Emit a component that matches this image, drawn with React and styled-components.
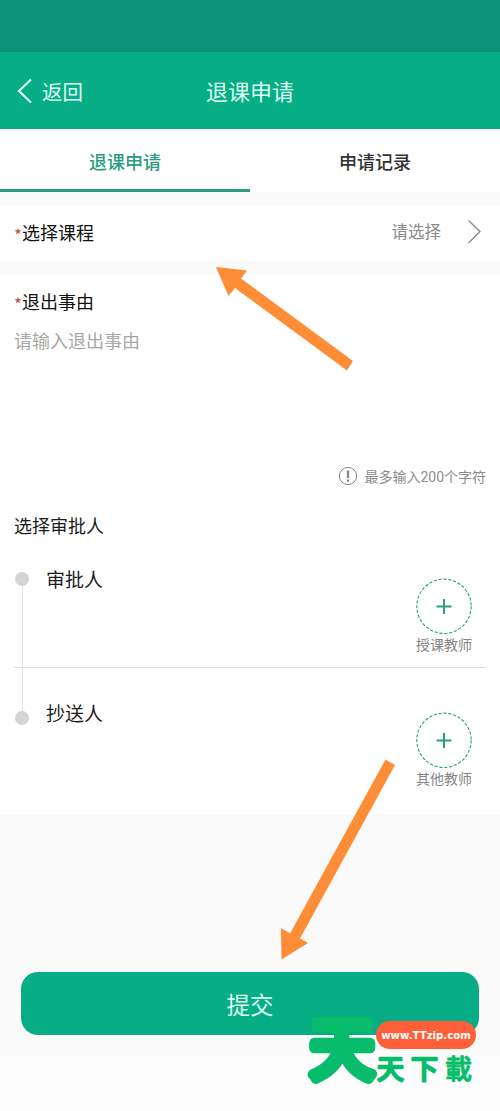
import React from "react";
import styled, { createGlobalStyle } from "styled-components";

const GlobalStyle = createGlobalStyle`
  * { box-sizing: border-box; }
  body {
    margin: 0;
    background: #fdfdfd;
    font-family: "Noto Sans CJK SC", sans-serif;
    color: #1c1c1c;
  }
`;

const Screen = styled.div`
  position: relative;
  width: 500px;
  height: 1111px;
  overflow: hidden;
  display: flex;
  flex-direction: column;
`;

const StatusBar = styled.div`
  height: 52px;
  background: #0b9176;
`;

const Header = styled.header`
  height: 77px;
  background: #07ad85;
  color: #dcfff4;
  display: grid;
  grid-template-columns: 1fr auto 1fr;
  align-items: center;
  padding: 0 17px;
`;

const BackButton = styled.div`
  display: flex;
  align-items: center;
  gap: 9px;
  font-size: 20.5px;
  line-height: 30px;
`;

const Title = styled.h1`
  margin: 0;
  padding-bottom: 2px;
  font-size: 22px;
  font-weight: 400;
  line-height: 32px;
`;

const Tabs = styled.nav`
  display: flex;
  height: 63px;
  background: #fff;
`;

const Tab = styled.div`
  flex: 1;
  text-align: center;
  font-size: 18px;
  font-weight: 500;
  line-height: 64px;
  color: ${(p) => (p.$active ? "#2a9d80" : "#333")};
  border-bottom: 3px solid ${(p) => (p.$active ? "#2a9d80" : "transparent")};
`;

const Gap = styled.div`
  height: 14px;
  background: #fafafa;
`;

const SelectRow = styled.section`
  height: 55px;
  padding: 0 18px 3px 14px;
  background: #fff;
  display: flex;
  align-items: center;
`;

const Label = styled.div`
  display: flex;
  flex: 1;
  height: 26px;
  font-size: 18px;
  line-height: 26px;
  color: #111;
`;

const Required = styled.span`
  width: 8px;
  color: #b5523f;
  font-size: 17px;
  line-height: 31px;
`;

const Value = styled.span`
  font-size: 16.5px;
  line-height: 24px;
  color: #8a8a8a;
  margin: -2px 26px 0 0;
`;

const Form = styled.section`
  height: 540px;
  padding: 13px 14px 0;
  background: #fff;
`;

const Placeholder = styled.div`
  margin-top: 13px;
  height: 137px;
  font-size: 18px;
  line-height: 26px;
  color: #a8a8a8;
`;

const Hint = styled.div`
  display: flex;
  justify-content: flex-end;
  align-items: center;
  gap: 6px;
  height: 24px;
  font-family: Roboto, "Noto Sans CJK SC", sans-serif;
  font-size: 14px;
  color: #8c8c8c;
`;

const SectionTitle = styled.div`
  margin-top: 24px;
  font-size: 18px;
  line-height: 26px;
`;

const Timeline = styled.div`
  display: grid;
  grid-template-columns: 32px 1fr;
  margin-top: 27px;
`;

const Rail = styled.div`
  display: flex;
  flex-direction: column;
  align-items: center;
  width: 16px;
  height: 160px;
  padding-top: 7px;
`;

const Dot = styled.i`
  width: 14px;
  height: 14px;
  flex: none;
  border-radius: 50%;
  background: #d4d4d4;
`;

const Line = styled.i`
  width: 1px;
  height: 125px;
  flex: none;
  background: #e2e2e2;
`;

const Steps = styled.div`
  min-width: 0;
`;

const Step = styled.div`
  display: flex;
  justify-content: space-between;
  align-items: flex-start;
  height: ${(p) => p.$height}px;
  padding-top: ${(p) => p.$top}px;
  font-size: 19px;
  line-height: 28px;
`;

const Divider = styled.div`
  height: 1px;
  margin-left: -32px;
  background: #dcdcdc;
`;

const Person = styled.div`
  display: flex;
  flex-direction: column;
  align-items: center;
  width: 56px;
  margin: 13px 14px 0 0;
  font-size: 14px;
  line-height: 20px;
  color: #858585;
  white-space: nowrap;

  svg { flex: none; }
`;

const Footer = styled.footer`
  height: 241px;
  padding: 157px 21px 0;
  background: #fafafa;
`;

const Submit = styled.div`
  height: 63px;
  border-radius: 17px;
  background: #07ad85;
  color: #dcfff4;
  font-size: 23.5px;
  line-height: 64px;
  text-align: center;
`;

const Arrows = styled.svg`
  position: absolute;
  inset: 0;
`;

const Watermark = styled.div`
  position: absolute;
  left: 290px;
  top: 990px;
  width: 200px;
  height: 121px;
`;

const Mark = styled.svg`
  display: block;
  fill: #07bd6b;
  stroke: #07bd6b;
  stroke-linejoin: round;
  stroke-linecap: round;
  font-family: "Noto Sans CJK TC", sans-serif;
`;

const Site = styled.span`
  position: absolute;
  left: 86px;
  top: 31px;
  width: 100px;
  height: 28px;
  border-radius: 14px;
  background: #ff5f38;
  color: #fff;
  font: 700 11.3px/29px "DejaVu Sans Condensed", "DejaVu Sans", sans-serif;
  font-stretch: condensed;
  text-align: center;
`;

function AddPerson({ name }) {
  return (
    <Person>
      <svg width="56" height="56" viewBox="0 0 56 56" fill="none" stroke="#2a9d80">
        <circle cx="28" cy="28.3" r="27.2" strokeWidth="1.1" strokeDasharray="3.2 1.7" />
        <path d="M20.5 28.4h15M28 20.9v15" strokeWidth="2" />
      </svg>
      {name}
    </Person>
  );
}

export default function App() {
  return (
    <Screen>
      <GlobalStyle />
      <StatusBar />
      <Header>
        <BackButton>
          <svg width="16" height="26" viewBox="0 0 16 26" fill="none" stroke="#dcfff4" strokeWidth="2.2">
            <path d="M14 1.5L2 13l12 11.5" />
          </svg>
          返回
        </BackButton>
        <Title>退课申请</Title>
      </Header>
      <Tabs>
        <Tab $active>退课申请</Tab>
        <Tab>申请记录</Tab>
      </Tabs>
      <Gap />
      <SelectRow>
        <Label><Required>*</Required>选择课程</Label>
        <Value>请选择</Value>
        <svg width="15" height="26" viewBox="0 0 15 26" fill="none" stroke="#858585" strokeWidth="1.2">
          <path d="M1.5 1.5L13 12.5L1.5 24" />
        </svg>
      </SelectRow>
      <Gap />
      <Form>
        <Label><Required>*</Required>退出事由</Label>
        <Placeholder>请输入退出事由</Placeholder>
        <Hint>
          <svg width="20" height="20" viewBox="0 0 20 20" fill="none" stroke="#858585">
            <circle cx="10" cy="10" r="8.6" />
            <path d="M10 4.5v7.5M10 13.5v2.2" strokeWidth="2.3" />
          </svg>
          最多输入200个字符
        </Hint>
        <SectionTitle>选择审批人</SectionTitle>
        <Timeline>
          <Rail><Dot /><Line /><Dot /></Rail>
          <Steps>
            <Step $height={102} $top={0}>审批人<AddPerson name="授课教师" /></Step>
            <Divider />
            <Step $height={120} $top={31}>抄送人<AddPerson name="其他教师" /></Step>
          </Steps>
        </Timeline>
      </Form>
      <Footer><Submit>提交</Submit></Footer>
      <Arrows width="500" height="1111" fill="#ff8d38">
        <path d="M216 267L247 270.5L241 278.5L353 361L347 370.5L235 288L228.5 296z" />
        <path d="M281.5 959.5L281 928L290 933.5L385.5 759.5L395 765L300 938.5L308 943z" />
      </Arrows>
      <Watermark>
        <Mark width="200" height="121" viewBox="0 0 200 121">
          <text
            x="52"
            y="84"
            fontSize="63"
            textAnchor="middle"
            strokeWidth="10"
            transform="matrix(1.02 0 0 1.054 -1 -5.15)"
          >
            天
          </text>
          <text x="87 121" y="89" fontSize="27" strokeWidth="2.4">天下</text>
          <text x="155" y="89" fontSize="27" fontWeight="500" strokeWidth="0.9">載</text>
        </Mark>
        <Site>www.TTzip.com</Site>
      </Watermark>
    </Screen>
  );
}
